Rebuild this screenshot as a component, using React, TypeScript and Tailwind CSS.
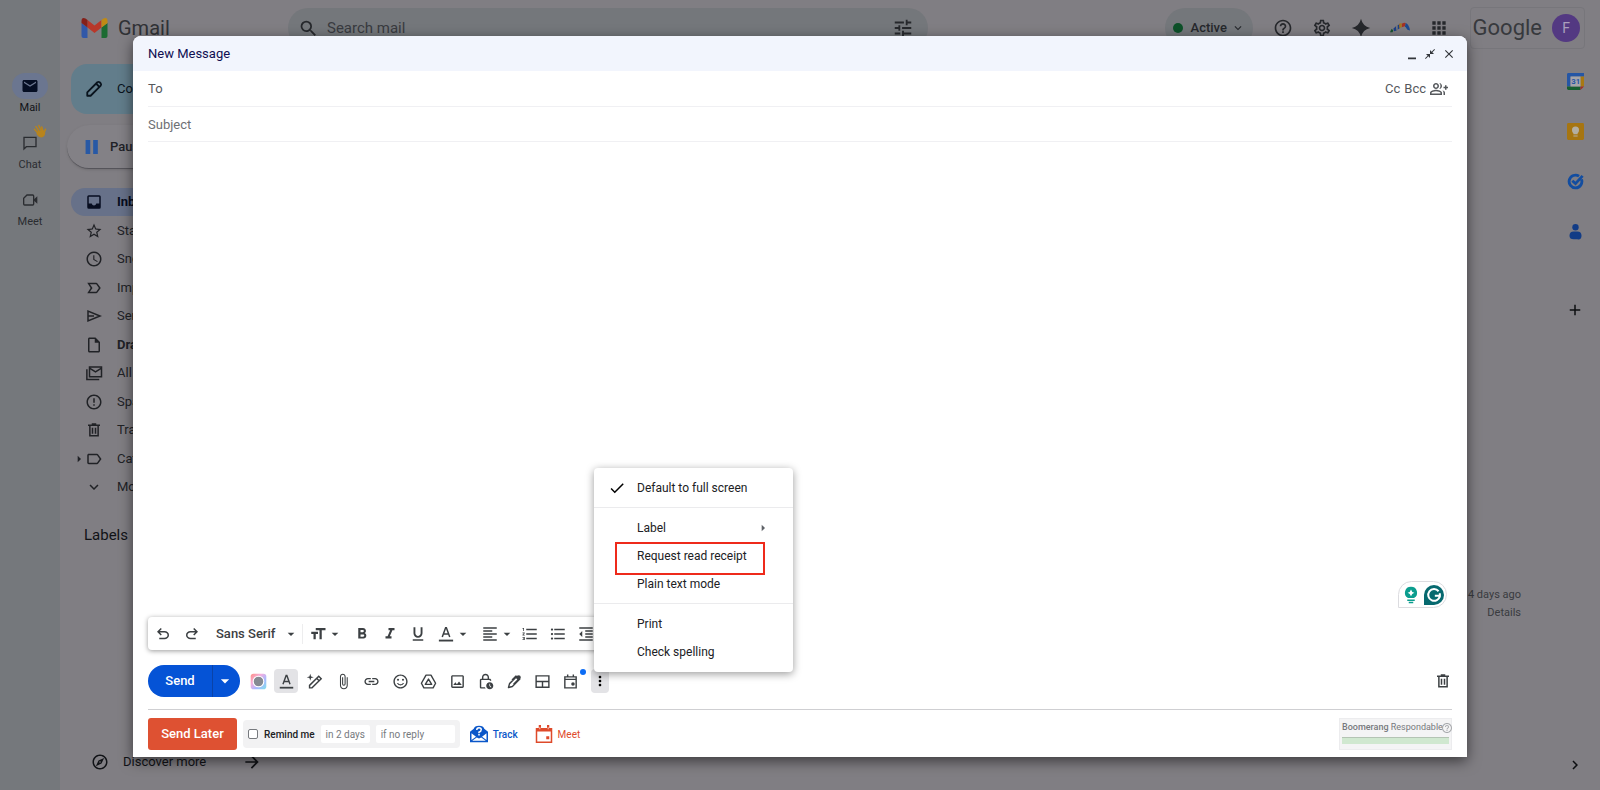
import type { ComponentType, ReactNode } from "react";
import {
  MdAccessTime, MdApps, MdArrowDropDown, MdArrowForward, MdArrowRight, MdAttachFile,
  MdCheck, MdChevronRight, MdClose, MdCloseFullscreen, MdErrorOutline, MdExpandMore, MdAdd,
  MdFormatAlignLeft, MdFormatBold, MdFormatIndentDecrease, MdFormatItalic,
  MdFormatListBulleted, MdFormatListNumbered, MdFormatSize, MdFormatUnderlined, MdHelpOutline,
  MdLabelImportantOutline, MdLabelOutline, MdLink, MdMail, MdMoreVert, MdOutlineExplore,
  MdOutlineGroupAdd, MdOutlineImage, MdOutlineInsertDriveFile, MdOutlineLockClock,
  MdOutlineSentimentSatisfiedAlt, MdOutlineSettings, MdSearch, MdStarBorder, MdTune,
} from "react-icons/md";

type IconProps = { className?: string };
type Icon = ComponentType<IconProps>;

function Svg({ children, className, box = "0 0 24 24" }: { children: ReactNode; className?: string; box?: string }) {
  return <svg viewBox={box} className={className} fill="currentColor" aria-hidden="true">{children}</svg>;
}

const line = { fill: "none", stroke: "currentColor", strokeWidth: 2 };

const Undo: Icon = ({ className }) => (
  <Svg className={className} box="0 -960 960 960"><path d="M280-200v-80h284q63 0 109.5-40T720-420q0-60-46.5-100T564-560H312l104 104-56 56-200-200 200-200 56 56-104 104h252q97 0 169.5 63T800-420q0 94-72.5 157T564-200H280Z" /></Svg>
);
const Redo: Icon = ({ className }) => (
  <Svg className={className} box="0 -960 960 960"><path transform="translate(960 0) scale(-1 1)" d="M280-200v-80h284q63 0 109.5-40T720-420q0-60-46.5-100T564-560H312l104 104-56 56-200-200 200-200 56 56-104 104h252q97 0 169.5 63T800-420q0 94-72.5 157T564-200H280Z" /></Svg>
);
const Inbox: Icon = ({ className }) => (
  <Svg className={className}><path fillRule="evenodd" d="M5 3h14q2 0 2 2v14q0 2-2 2H5q-2 0-2-2V5q0-2 2-2zm0 2v9h4q.5 2.500 3 2.500t3-2.500h4V5z" /></Svg>
);
const Sent: Icon = ({ className }) => (
  <Svg className={className}><path {...line} d="M4 5.500v13L20 12zM4.500 12H12" /></Svg>
);
const Trash: Icon = ({ className }) => (
  <Svg className={className}><path {...line} d="M6.500 6v13.500h11V6M4 5.500h16M9 4h6M10 9v8M14 9v8" /></Svg>
);
const Chat: Icon = ({ className }) => (
  <Svg className={className}><path {...line} d="M3 3.500h18v14H6.500L3 21z" /></Svg>
);
const Meet: Icon = ({ className }) => (
  <Svg className={className}><path {...line} d="M7.500 4.500H16q1.500 0 1.500 1.500v12q0 1.500-1.500 1.500H4Q2.500 19.500 2.500 18V9.500z" /><path d="M18 11l5-4.500v11L18 13z" /></Svg>
);
const AllMail: Icon = ({ className }) => (
  <Svg className={className}><path {...line} d="M6 4h16v13H6zM6 5.500l8 5 8-5M2.500 7v13.500H19" /></Svg>
);
const Pencil: Icon = ({ className }) => (
  <Svg className={className}><path {...line} strokeWidth={2.400} strokeLinejoin="round" d="M3 21v-4.500L16.500 3Q18 2 19.500 3l1.500 1.500q1 1.500 0 3L7.500 21zM15 5l4 4" /></Svg>
);
const TextColor: Icon = ({ className }) => (
  <Svg className={className}><path {...line} d="M7 16l4.500-12.500h1L17 16M8.500 12h7" /><path d="M2.500 19.500h19V22h-19z" /></Svg>
);
const Magic: Icon = ({ className }) => (
  <Svg className={className}><path {...line} d="M5 21v-3.500L18 4.500 21.500 8 8.500 21zM15 7.500l3.500 3.500" /><path d="M6 1l1.200 3.800L11 6 7.200 7.200 6 11 4.800 7.200 1 6l3.800-1.200z" /></Svg>
);
const Drive: Icon = ({ className }) => (
  <Svg className={className}><path {...line} strokeLinejoin="round" d="M8.500 3h7L22 14.500 18.500 21h-13L2 14.500zM12 8.500L7.500 16h9z" /></Svg>
);
const Signature: Icon = ({ className }) => (
  <Svg className={className}><path {...line} strokeLinejoin="round" d="M3.500 20.500l1.500-5.500L15.500 4.500l4 4L9 19zM14.500 4l-6 6" /><path d="M16 4q2-2 4 0t0 4l-8.500 8.500-1.500-1.500 6-6-2-2z" /></Svg>
);
const Layout: Icon = ({ className }) => (
  <Svg className={className}><path {...line} d="M3 4h18v16H3zM3 12h18M12 12v8" /></Svg>
);
const Schedule: Icon = ({ className }) => (
  <Svg className={className}><path {...line} d="M4 5.500h16V21H4zM4 9h16M8 2v4M16 2v4" /><circle cx="15.500" cy="15.500" r="2.500" /></Svg>
);
const Sparkle: Icon = ({ className }) => (
  <Svg className={className}><path d="M12 1q2 9 11 11-9 2-11 11Q10 14 1 12 10 10 12 1z" /></Svg>
);
const Boomerang: Icon = ({ className }) => (
  <Svg className={className}>
    <path fill="#17532f" d="M0 17l2-4 2 2-1 2z" />
    <path fill="#1c3f86" d="M4 13l3-3 1 5-3 1zM9 9l3-2v5l-3 2z" />
    <path fill="#74777c" d="M7 10l2-1v5l-1 1z" />
    <path fill="#a43225" d="M14 7q3-2 5-1l-1 4-4 1z" />
    <path fill="#a8761d" d="M11 7l3-1v5l-3 1z" />
    <path fill="#1c4a92" d="M19 6q4 2 5 9l-3-1-3-4z" />
  </Svg>
);
const Wave: Icon = ({ className }) => (
  <Svg className={className}>
    <path fill="none" stroke="currentColor" strokeWidth="2.600" strokeLinecap="round" d="M8 15L2.500 9M10 12L5 4.500M14 11L10 2.500M17 12l-2-7M19 15l2.500-6" />
    <path d="M7 13l10-3 4 5q0 6-6 8-5 0-9-6z" />
  </Svg>
);
const Minimise: Icon = ({ className }) => (
  <Svg className={className}><path d="M4 19h16v3.500H4z" /></Svg>
);
const Swatch: Icon = ({ className }) => (
  <Svg className={className}>
    <defs><linearGradient id="swatch" x1="0" y1="0" x2="1" y2="1"><stop offset="0" stopColor="#ff8f82" /><stop offset=".35" stopColor="#f5b0de" /><stop offset=".65" stopColor="#a8b8ff" /><stop offset="1" stopColor="#7fe0ea" /></linearGradient></defs>
    <rect x="1" y="1" width="22" height="22" rx="4" fill="url(#swatch)" />
    <circle cx="12" cy="12" r="7.500" fill="#858a92" stroke="#fff" strokeWidth="1.500" />
  </Svg>
);

const labels: { text: string; icon: Icon; bold?: boolean; active?: boolean; nested?: boolean }[] = [
  { text: "Inbox", icon: Inbox, bold: true, active: true },
  { text: "Starred", icon: MdStarBorder },
  { text: "Snoozed", icon: MdAccessTime },
  { text: "Important", icon: MdLabelImportantOutline },
  { text: "Sent", icon: Sent },
  { text: "Drafts", icon: MdOutlineInsertDriveFile, bold: true },
  { text: "All Mail", icon: AllMail },
  { text: "Spam", icon: MdErrorOutline },
  { text: "Trash", icon: Trash },
  { text: "Categories", icon: MdLabelOutline, nested: true },
  { text: "More", icon: MdExpandMore },
];

function Rail() {
  const items: { text: string; icon: Icon }[] = [
    { text: "Mail", icon: MdMail }, { text: "Chat", icon: Chat }, { text: "Meet", icon: Meet },
  ];
  return (
    <nav className="flex w-15 shrink-0 flex-col items-center gap-[13px] bg-[#75787c] pt-[73px] text-[11px] text-[#2a2c30]">
      {items.map(({ text, icon: I }, i) => (
        <a key={text} href={"#" + text.toLowerCase()} className={i === 0 ? "text-[#111317]" : ""}>
          <span className={"relative mx-auto flex h-[26px] w-9 items-center justify-center rounded-full " + (i === 0 ? "bg-[#6b7690] text-[#050e24]" : "")}>
            <I className={i === 0 ? "size-[18px]" : "size-4"} />
            {i === 1 && <Wave className="absolute -top-1.5 right-px size-3.5 text-[#b8841c]" />}
          </span>
          <span className="block text-center leading-[18px]">{text}</span>
        </a>
      ))}
    </nav>
  );
}

function TopBar() {
  const tools: { name: string; icon: Icon }[] = [
    { name: "Help", icon: MdHelpOutline }, { name: "Settings", icon: MdOutlineSettings },
    { name: "Assistant", icon: Sparkle }, { name: "Boomerang", icon: Boomerang }, { name: "Apps", icon: MdApps },
  ];
  return (
    <header className="flex h-14 items-center pr-[15px] pl-[21px] text-[#26282c]">
      <a href="#home" className="flex w-[207px] items-center gap-2.5 text-xl text-[#303236]">
        <svg viewBox="0 0 26 20" className="h-5 w-[27px]" aria-hidden="true">
          <path fill="#3158a8" d="M0 5l6 4.500V20H2q-2 0-2-2z" />
          <path fill="#1c6b32" d="M26 5l-6 4.500V20h4q2 0 2-2z" />
          <path fill="#b8382a" d="M6 2l7 5.500L20 2v7.500L13 15 6 9.500z" />
          <path fill="#84201a" d="M0 3q0-4 4-2.500L6 2v7.500L0 5z" />
          <path fill="#c08a14" d="M26 3q0-4-4-2.500L20 2v7.500L26 5z" />
        </svg>
        Gmail
      </a>
      <div className="flex h-10 w-[640px] items-center gap-2 rounded-full bg-[#74777b] pr-3.5 pl-2.5">
        <MdSearch className="size-[21px]" />
        <input type="search" aria-label="Search mail" placeholder="Search mail" className="min-w-0 flex-1 text-[15px] placeholder:text-[#393b40]" />
        <button aria-label="Search options"><MdTune className="size-[22px]" /></button>
      </div>
      <button className="ml-auto flex h-10 w-[88px] items-center gap-2 rounded-full bg-[#74777b] pl-2 text-[13px] font-medium">
        <span className="size-2.5 rounded-full bg-[#0d5129]" />Active<MdExpandMore className="-ml-1 size-3.5" />
      </button>
      <div className="mr-[21px] ml-5 flex gap-[19px]">
        {tools.map(({ name, icon: I }) => (
          <button key={name} aria-label={name}><I className="size-5" /></button>
        ))}
      </div>
      <div className="flex h-[42px] items-center gap-2.5 rounded border border-[#77767b] pr-1 pl-0.5">
        <span className="text-[22px] leading-none text-[#37393d]">Google</span>
        <button aria-label="Account" className="flex size-7 items-center justify-center rounded-full bg-[#533982] text-sm text-[#aaa0bd]">F</button>
      </div>
    </header>
  );
}

function Sidebar() {
  return (
    <aside className="flex w-[228px] flex-col pt-2 pl-[11px] text-[13px] text-[#202226]">
      <button className="flex h-[50px] w-36 items-center gap-3.5 rounded-2xl bg-[#627d8b] pl-3.5 text-[#09131d]">
        <Pencil className="size-[18px]" />Compose
      </button>
      <button className="mt-[11px] -ml-1 flex h-11 w-44 items-center gap-[11px] rounded-full border-b border-[#55545a] bg-[#838186] pl-[18px] font-medium shadow-sm">
        <Svg className="size-3.5 text-[#2859a5]"><path d="M1 0h8v24H1zM14 0h8v24h-8z" /></Svg>Pause Inbox
      </button>
      <ul className="mt-[19px] flex h-[313px] flex-col justify-between">
        {labels.map(({ text, icon: I, bold, active, nested }) => (
          <li key={text}>
            <a href={"#" + text.toLowerCase()} className={"relative flex h-7 items-center gap-3.5 rounded-full pl-3.5 " + (active ? "bg-[#677189] text-[#070d20] " : "") + (bold ? "font-bold" : "")}>
              {nested && <MdArrowRight className="absolute left-0 size-4" />}
              <I className="size-[18px]" />{text}
            </a>
          </li>
        ))}
      </ul>
      <h2 className="mt-[22px] ml-[13px] text-[15px] leading-6 text-[#111317]">Labels</h2>
      <a href="#discover" className="mt-auto mb-[18px] ml-5 flex items-center gap-3.5 text-[#111317]">
        <MdOutlineExplore className="size-[18px]" />Discover more<MdArrowForward className="ml-[22px] size-5" />
      </a>
    </aside>
  );
}

function SidePanel() {
  return (
    <aside className="flex w-[50px] flex-col items-center pt-[17px] pb-4 text-[#0d0f12]">
      <div className="flex flex-col gap-[33px]">
        <button aria-label="Calendar" className="size-[17px]">
          <Svg>
            <path fill="#2556a5" d="M0 2q0-2 2-2h22v5H5v14H0z" /><path fill="#a87912" d="M19 5h5v14h-5z" />
            <path fill="#175f30" d="M0 19h19v5H2q-2 0-2-2z" /><path fill="#a32d22" d="M19 19h5l-5 5z" />
            <path fill="#a5a5aa" d="M5 5h14v14H5z" /><text x="6" y="16" fontSize="11" fontWeight="700" fill="#2556a5">31</text>
          </Svg>
        </button>
        <button aria-label="Keep" className="size-[17px]">
          <Svg><rect width="24" height="24" rx="2" fill="#a67511" /><circle cx="12" cy="10" r="5" fill="#b3aea2" /><path fill="#b3aea2" d="M9 13h6v3H9zM9 17.500h6V19H9z" /></Svg>
        </button>
        <button aria-label="Tasks" className="size-[17px]">
          <Svg><path fill="none" stroke="#124da0" strokeWidth="4" d="M20.500 9A9 9 0 1 1 17 4.500M7.500 11l4.500 4L22 4" /></Svg>
        </button>
        <button aria-label="Contacts" className="size-[17px]">
          <Svg className="text-[#123c86]"><circle cx="12" cy="6" r="4.500" /><path d="M3.500 18q0-6 6-6h5q6 0 6 6t-6 5h-5q-6 0-6-5z" /></Svg>
        </button>
      </div>
      <button aria-label="Get add-ons" className="mt-[61px]"><MdAdd className="size-[18px]" /></button>
      <button aria-label="Hide side panel" className="mt-auto"><MdChevronRight className="size-[18px]" /></button>
    </aside>
  );
}

function MenuItem({ children, checked, sub, marked }: { children: ReactNode; checked?: boolean; sub?: boolean; marked?: boolean }) {
  return (
    <button role="menuitem" className="relative flex h-7 w-full items-center pl-[43px] text-left">
      {checked && <MdCheck className="absolute left-3.5 size-[18px] text-black" />}
      {marked && <span className="absolute top-0 left-[21px] h-[33px] w-[150px] border-2 border-[#ee2a1b]" />}
      {children}
      {sub && <MdArrowRight className="absolute right-[22px] size-4 text-[#5f6368]" />}
    </button>
  );
}

function MoreMenu() {
  return (
    <div role="menu" className="absolute bottom-[21px] left-[3px] z-10 w-[199px] rounded-sm bg-white py-1.5 text-xs text-[#202124] shadow-[0_2px_8px_rgba(0,0,0,0.4)]">
      <MenuItem checked>Default to full screen</MenuItem>
      <hr className="mt-[5px] mb-1.5 border-[#ebebed]" />
      <MenuItem sub>Label</MenuItem>
      <MenuItem marked>Request read receipt</MenuItem>
      <MenuItem>Plain text mode</MenuItem>
      <hr className="mt-[5px] mb-1.5 border-[#ebebed]" />
      <MenuItem>Print</MenuItem>
      <MenuItem>Check spelling</MenuItem>
    </div>
  );
}

function FormatButton({ name, icon: I, drop }: { name: string; icon: Icon; drop?: boolean }) {
  return (
    <button aria-label={name} className="flex items-center">
      <I className="size-[18px]" />{drop && <MdArrowDropDown className="-mr-1 size-4" />}
    </button>
  );
}

function FormatBar() {
  return (
    <div className="flex h-[33px] w-[640px] items-center rounded-sm bg-white pl-1.5 text-[#3c4043] shadow-[0_1px_5px_rgba(0,0,0,0.4)]">
      <div className="flex gap-[11px]"><FormatButton name="Undo" icon={Undo} /><FormatButton name="Redo" icon={Redo} /></div>
      <div className="relative ml-[15px] flex items-center">
        <select aria-label="Font" className="w-[83px] appearance-none text-[13px] font-medium"><option>Sans Serif</option></select>
        <MdArrowDropDown className="pointer-events-none absolute right-0 size-4" />
      </div>
      <span className="mx-[3px] h-5 w-px bg-[#ededee]" />
      <div className="ml-[3px] flex"><FormatButton name="Size" icon={MdFormatSize} drop /></div>
      <div className="ml-3.5 flex gap-2.5">
        <FormatButton name="Bold" icon={MdFormatBold} /><FormatButton name="Italic" icon={MdFormatItalic} />
        <FormatButton name="Underline" icon={MdFormatUnderlined} /><FormatButton name="Text colour" icon={TextColor} drop />
      </div>
      <div className="ml-3.5 flex gap-2.5">
        <FormatButton name="Align" icon={MdFormatAlignLeft} drop /><FormatButton name="Numbered list" icon={MdFormatListNumbered} />
        <FormatButton name="Bulleted list" icon={MdFormatListBulleted} /><FormatButton name="Indent less" icon={MdFormatIndentDecrease} />
      </div>
    </div>
  );
}

const actions: { name: string; icon: Icon }[] = [
  { name: "Theme", icon: Swatch }, { name: "Formatting options", icon: TextColor },
  { name: "Help me write", icon: Magic }, { name: "Attach files", icon: MdAttachFile },
  { name: "Insert link", icon: MdLink }, { name: "Insert emoji", icon: MdOutlineSentimentSatisfiedAlt },
  { name: "Insert from Drive", icon: Drive }, { name: "Insert photo", icon: MdOutlineImage },
  { name: "Confidential mode", icon: MdOutlineLockClock }, { name: "Insert signature", icon: Signature },
  { name: "Select a layout", icon: Layout }, { name: "Set up a time to meet", icon: Schedule },
];

function ActionBar() {
  return (
    <div className="flex items-center text-[#3c4043]">
      <div className="flex h-8 items-center overflow-hidden rounded-full bg-[#0553d6] text-[13px] font-medium text-white">
        <button className="h-full w-16">Send</button>
        <button aria-label="More send options" className="flex h-full w-7 items-center border-l border-[#0a43a8] pl-0.5"><MdArrowDropDown className="size-5" /></button>
      </div>
      <div className="ml-1.5 flex w-[337px] justify-between">
        {actions.map(({ name, icon: I }, i) => (
          <button key={name} aria-label={name} className={"relative flex size-6 items-center justify-center rounded-sm " + (i === 1 ? "bg-[#e3e3e6]" : "")}>
            <I className="size-[17px]" />
            {i === 11 && <span className="absolute top-0 -right-[3px] size-1.5 rounded-full bg-[#0b6cf5]" />}
          </button>
        ))}
      </div>
      <div className="relative ml-2">
        <button aria-label="More options" className="flex h-6 w-[18px] items-center justify-center rounded-sm bg-[#e3e3e6] text-black"><MdMoreVert className="size-4 shrink-0" /></button>
        <MoreMenu />
      </div>
      <button aria-label="Discard draft" className="ml-auto"><Trash className="size-[18px]" /></button>
    </div>
  );
}

function BoomerangBar() {
  return (
    <div className="flex items-center text-[10px]">
      <button className="h-8 w-[89px] rounded-[3px] bg-[#de5132] text-[13px] font-medium text-white">Send Later</button>
      <div className="ml-1.5 flex h-7 items-center gap-1.5 rounded bg-[#f2f2f3] px-[5px] text-[#777a7e]">
        <label className="flex items-center gap-1.5 font-medium text-[#202124]">
          <input type="checkbox" className="size-2.5 appearance-none rounded-[2px] border border-[#777a7e] bg-white" />Remind me
        </label>
        <input aria-label="Remind when" defaultValue="in 2 days" className="h-[18px] w-[49px] rounded-[2px] bg-white text-center" />
        <input aria-label="Remind condition" defaultValue="if no reply" className="h-[18px] w-[79px] rounded-[2px] bg-white px-[5px]" />
      </div>
      <button className="ml-2.5 flex items-center gap-[5px] font-medium text-[#0b57c9]">
        <Svg className="size-[18px]">
          <path d="M0 9l5-4q1-4 7-4t7 4l5 4v14H0z" />
          <path fill="#fff" d="M2 11l6 4.500L2 20zM22 11l-6 4.500L22 20zM3 21l6-4.500 3 1.500 3-1.500 6 4.500z" />
          <path fill="none" stroke="#fff" strokeWidth="2" d="M9 6.500q0-3 3-3t3 2.500-3 3.500v1.500M12 12v2" />
        </Svg>
        Track
      </button>
      <button className="ml-[17px] flex items-center gap-[5px] text-[#de4a2b]">
        <Svg className="size-[18px]"><path {...line} d="M2 5h20v18H2z" /><path d="M2 4h20v4.500H2zM15 15h4v4h-4zM5 0h3v5H5zM16 0h3v5h-3z" /><path fill="#fff" d="M6 3h1v2.500H6zM17 3h1v2.500h-1z" /></Svg>
        Meet
      </button>
      <div className="ml-auto w-[113px] border border-[#ececee] bg-[#f4f4f5] px-0.5 pt-0.5 pb-[5px] text-[9px] text-[#77797d]">
        <div className="flex items-center whitespace-nowrap">
          <span><span className="font-medium">Boomerang</span> Respondable</span><MdHelpOutline className="-ml-0.5 size-3 shrink-0 text-[#a8aaad]" />
        </div>
        <div className="mt-0.5 h-[7px] border-t border-[#b4c4b4] bg-[#d0e8d0]" />
      </div>
    </div>
  );
}

function ComposeDialog() {
  return (
    <section role="dialog" aria-label="New Message" className="absolute inset-x-[133px] top-9 bottom-[33px] flex flex-col overflow-hidden rounded-t-lg bg-white text-[13px] text-[#55585c] shadow-[0_4px_14px_rgba(0,0,0,0.55)]">
      <div className="flex h-[35px] shrink-0 items-center justify-between bg-[#f2f5fd] pr-[11px] pl-[15px] text-[#33363b]">
        <h1 className="text-[13px] text-[#100f52]">New Message</h1>
        <div className="flex items-center gap-1.5">
          <button aria-label="Minimise"><Minimise className="size-3" /></button>
          <button aria-label="Exit full screen"><MdCloseFullscreen className="size-3" /></button>
          <button aria-label="Close"><MdClose className="size-3.5" /></button>
        </div>
      </div>
      <div className="flex flex-1 flex-col px-[15px] pb-[7px]">
        <div className="flex h-9 items-center gap-1 border-b border-[#f0f0f3]">
          <label htmlFor="to">To</label>
          <input id="to" className="min-w-0 flex-1 outline-none" />
          <button>Cc</button><button>Bcc</button>
          <button aria-label="Add people" className="mr-1"><MdOutlineGroupAdd className="size-[18px]" /></button>
        </div>
        <input aria-label="Subject" placeholder="Subject" className="h-[35px] border-b border-[#f0f0f3] outline-none placeholder:text-[#6d7074]" />
        <textarea aria-label="Message body" className="w-full flex-1 resize-none outline-none" />
        <div className="mr-[5px] mb-[9px] flex h-[27px] w-[49px] items-center justify-center gap-1 self-end rounded-t-full rounded-br-full border border-[#dcdce0] bg-white">
          <Svg className="size-[18px] text-[#0b9d8e]"><path d="M12 1a8 8 0 0 1 4 15H8a8 8 0 0 1 4-15zM7 18h10v2H7zM9 21h6v2H9z" /><path fill="#fff" d="M12 4.500q1 4 4.500 4.500-3.500 1-4.500 4.500Q11 10 7.500 9q3.500-.5 4.500-4.500z" /></Svg>
          <Svg className="size-5 text-[#06696f]"><path d="M12 0a12 12 0 1 1 0 24H0V12A12 12 0 0 1 12 0z" /><path fill="none" stroke="#fff" strokeWidth="2.400" d="M17.500 7.500A7 7 0 1 0 19 13h-6M19 10v5" /></Svg>
        </div>
        <FormatBar />
        <div className="mt-[15px]"><ActionBar /></div>
        <hr className="mt-3 mb-2 border-[#cfcfd2]" />
        <BoomerangBar />
      </div>
    </section>
  );
}

export default function App() {
  return (
    <div className="relative flex min-h-screen overflow-hidden bg-[#807e83] font-['Roboto','Liberation_Sans',sans-serif]">
      <Rail />
      <div className="flex min-w-0 flex-1 flex-col">
        <TopBar />
        <div className="flex flex-1">
          <Sidebar />
          <main className="flex flex-1 flex-col items-end pt-[530px] pr-[29px] text-[11px] leading-[18px] text-[#393b3f]">
            <p>4 days ago</p>
            <a href="#details">Details</a>
          </main>
          <SidePanel />
        </div>
      </div>
      <ComposeDialog />
    </div>
  );
}
